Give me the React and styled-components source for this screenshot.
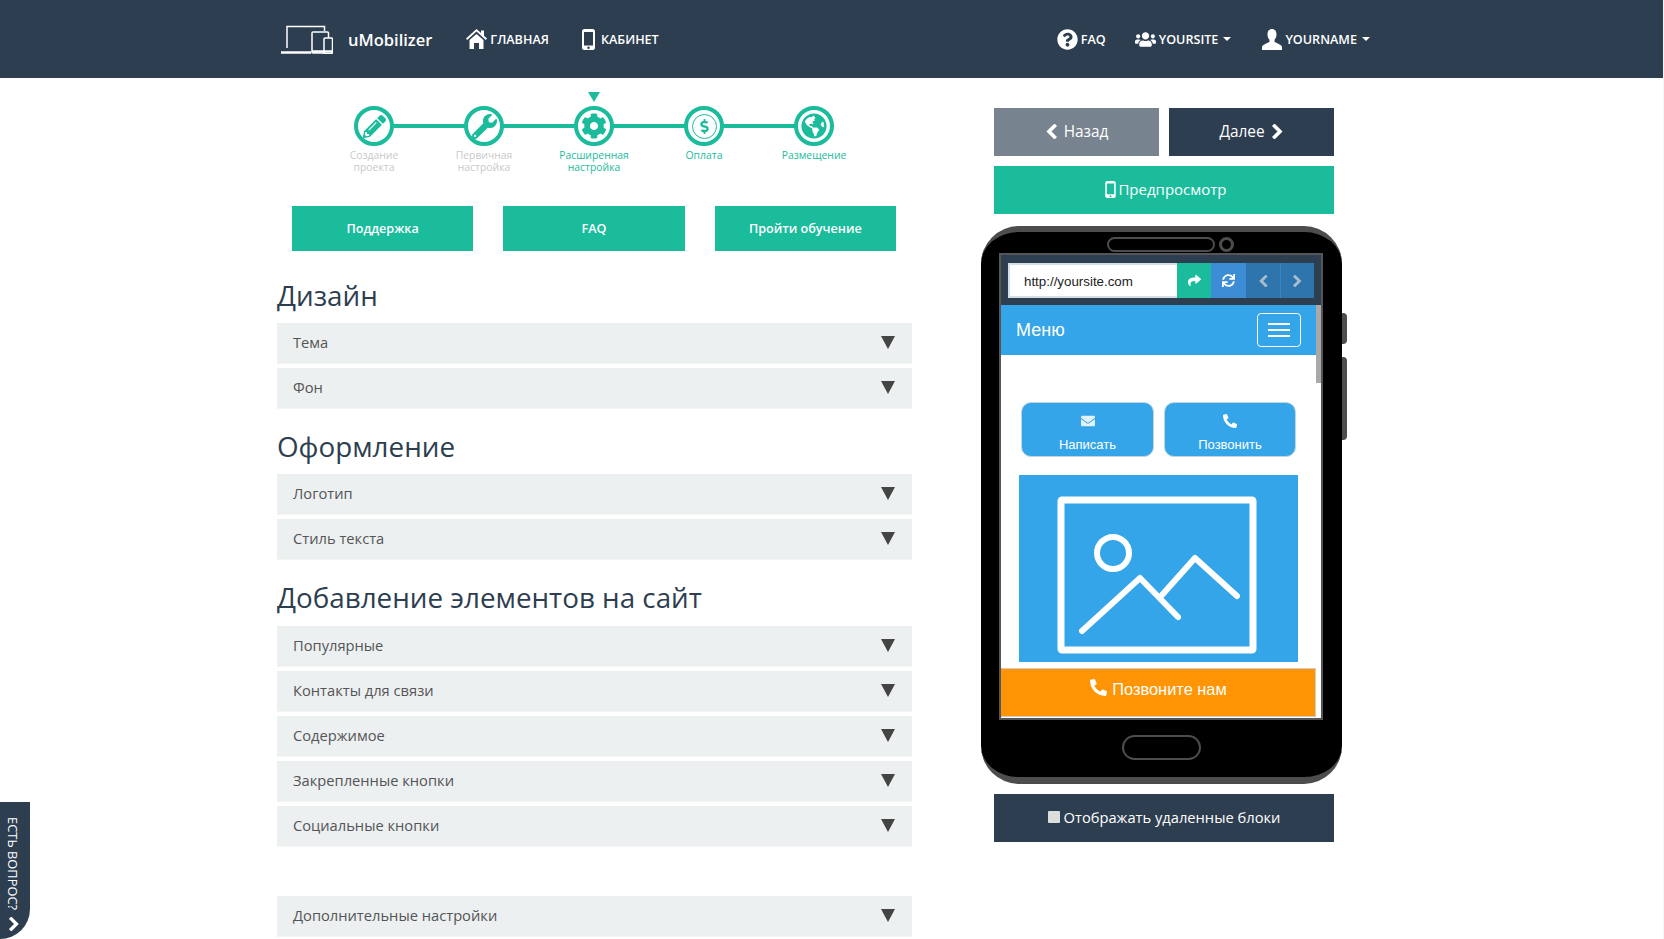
import React from "react";
import styled, { createGlobalStyle } from "styled-components";
import {
  FaPencilAlt,
  FaWrench,
  FaCog,
  FaGlobeAmericas,
  FaDollarSign,
  FaShare,
  FaSync,
  FaEnvelope,
  FaPhoneAlt,
  FaQuestionCircle,
  FaUsers,
} from "react-icons/fa";

const dark = "#2d3e50";
const green = "#1abc9c";
const sky = "#33a5e8";
const sans = `"Open Sans", "Liberation Sans", sans-serif`;
const arial = `"Liberation Sans", Arial, sans-serif`;

const GlobalStyle = createGlobalStyle`
  html, body {
    margin: 0;
    padding: 0;
    background: #fff;
    overflow: hidden;
  }
  body {
    font-family: ${sans};
    color: #333;
  }
`;

const Page = styled.div`
  position: relative;
  height: 939px;
  overflow: hidden;
  &::after {
    content: "";
    position: absolute;
    top: 0;
    right: 0;
    bottom: 0;
    width: 1px;
    background: #f5f5f5;
  }
`;

const Header = styled.header`
  height: 78px;
  background: ${dark};
`;

const Container = styled.div`
  width: 1140px;
  margin: 0 auto;
`;

const NavBar = styled(Container)`
  display: flex;
  align-items: center;
  height: 78px;
  padding: 0 30px 0 19px;
  box-sizing: border-box;
  color: #fff;
`;

const Brand = styled.div`
  display: flex;
  align-items: center;
  gap: 15px;
  font-size: 16.5px;
  font-weight: 600;
  margin-right: 34px;
`;

const NavItem = styled.div`
  display: flex;
  align-items: center;
  gap: ${(props) => props.gap || 3}px;
  font-size: 12.6px;
  font-weight: 600;
  margin-left: ${(props) => props.offset || 0}px;
  svg {
    display: block;
  }
`;

const Caret = styled.span`
  width: 0;
  height: 0;
  margin-left: 2px;
  border-left: 4px solid transparent;
  border-right: 4px solid transparent;
  border-top: 4px solid #fff;
`;

const Main = styled(Container)`
  display: grid;
  grid-template-columns: 635px 340px;
  column-gap: 82px;
  padding: 0 15px;
  box-sizing: border-box;
`;

const LeftColumn = styled.div`
  padding-top: 28px;
`;

const Steps = styled.div`
  display: flex;
  height: 100px;
  margin-left: 42px;
`;

const Step = styled.div`
  position: relative;
  width: 110px;
  display: flex;
  flex-direction: column;
  align-items: center;
  color: ${(props) => (props.active ? green : "#c9c9c9")};
  &:not(:last-child)::after {
    content: "";
    position: absolute;
    top: 18px;
    left: 74px;
    width: 72px;
    height: 4px;
    background: ${green};
  }
`;

const StepPointer = styled.span`
  position: absolute;
  top: -14px;
  left: 50%;
  margin-left: -6px;
  border-left: 6px solid transparent;
  border-right: 6px solid transparent;
  border-top: 10px solid ${green};
`;

const StepCircle = styled.div`
  width: 40px;
  height: 40px;
  box-sizing: border-box;
  border: 4px solid ${green};
  border-radius: 50%;
  display: flex;
  align-items: center;
  justify-content: center;
  color: ${green};
  font-size: ${(props) => props.size || 24}px;
`;

const DollarRing = styled.div`
  width: 25px;
  height: 25px;
  box-sizing: border-box;
  border: 1.5px solid ${green};
  border-radius: 50%;
  display: flex;
  align-items: center;
  justify-content: center;
  font-size: 15px;
`;

const StepLabel = styled.div`
  margin-top: 3px;
  font-size: 10.4px;
  line-height: 12px;
  text-align: center;
  white-space: pre-line;
`;

const HelpButtons = styled.div`
  display: flex;
  gap: 30px;
  padding: 0 16px 0 15px;
`;

const HelpButton = styled.div`
  flex: 1;
  height: 45px;
  box-sizing: border-box;
  padding-bottom: 1px;
  display: flex;
  align-items: center;
  justify-content: center;
  background: ${green};
  color: #fff;
  font-size: 12.6px;
  font-weight: 600;
`;

const Heading = styled.h2`
  margin: ${(props) => props.top || 21}px 0 ${(props) => props.bottom || 9}px;
  height: 36px;
  font-size: 27.8px;
  font-weight: 400;
  line-height: 34px;
  color: ${dark};
`;

const Row = styled.div`
  height: 40px;
  box-sizing: border-box;
  margin-bottom: 5px;
  margin-top: ${(props) => props.top || 0}px;
  padding: 0 17px 2px 16px;
  display: flex;
  align-items: center;
  justify-content: space-between;
  background: #ecf0f1;
  box-shadow: 0 1px 0 #f4f6f6;
  font-size: 14.7px;
  color: #555;
  &:last-child {
    margin-bottom: 0;
  }
`;

const RowArrow = styled.span`
  width: 0;
  height: 0;
  margin-top: 1px;
  border-left: 7px solid transparent;
  border-right: 7px solid transparent;
  border-top: 13px solid #444;
`;

const RightColumn = styled.div`
  padding-top: 30px;
`;

const ButtonPair = styled.div`
  display: flex;
  gap: 10px;
  margin-bottom: 10px;
`;

const ActionButton = styled.div`
  flex: 1;
  height: 48px;
  box-sizing: border-box;
  padding-bottom: 2px;
  display: flex;
  align-items: center;
  justify-content: center;
  gap: ${(props) => props.gap || 0}px;
  background: ${(props) => props.bg || dark};
  color: #fff;
  font-size: 15px;
`;

const NavButton = styled(ActionButton)`
  font-size: 15.4px;
`;

const PreviewButton = styled(ActionButton)`
  padding-left: 4px;
`;

const Phone = styled.div`
  position: relative;
  width: 361px;
  height: 558px;
  margin: 12px 0 10px -13px;
  box-sizing: border-box;
  padding-top: 5px;
  background: #000;
  border-top: 6px solid #4d4d4d;
  border-bottom: 7px solid #4d4d4d;
  border-radius: 38px;
`;

const SideKey = styled.span`
  position: absolute;
  right: -5px;
  top: ${(props) => props.top}px;
  width: 5px;
  height: ${(props) => props.h}px;
  background: #4d4d4d;
  border-radius: 0 4px 4px 0;
`;

const PhoneTop = styled.div`
  display: flex;
  align-items: center;
  height: 15px;
  padding-left: 126px;
  gap: 4px;
`;

const Speaker = styled.span`
  width: 108px;
  height: 15px;
  box-sizing: border-box;
  border: 2px solid #4d4d4d;
  border-radius: 8px;
`;

const Camera = styled.span`
  width: 15px;
  height: 15px;
  box-sizing: border-box;
  border: 3px solid #4d4d4d;
  border-radius: 50%;
`;

const Screen = styled.div`
  position: relative;
  width: 324px;
  height: 467px;
  margin: 1px 0 0 18px;
  box-sizing: border-box;
  background: #fff;
  border: 2px solid #555;
  font-family: ${arial};
  overflow: hidden;
`;

const ScrollThumb = styled.span`
  position: absolute;
  top: 50px;
  right: 0;
  width: 5px;
  height: 78px;
  background: #a9a9a9;
`;

const UrlBar = styled.div`
  display: flex;
  height: 50px;
  padding: 8px 7px;
  box-sizing: border-box;
  background: ${dark};
`;

const UrlField = styled.div`
  width: 169px;
  height: 35px;
  box-sizing: border-box;
  display: flex;
  align-items: center;
  padding: 2px 0 0 14px;
  background: #fff;
  border: 2px solid #d5dfe8;
  border-right: 0;
  font-size: 13.33px;
  color: #222;
`;

const UrlButton = styled.div`
  width: ${(props) => props.w || 34}px;
  height: 35px;
  box-sizing: border-box;
  display: flex;
  align-items: center;
  justify-content: center;
  background: ${(props) => props.bg};
  color: ${(props) => props.color || "#fff"};
  font-size: 13px;
  border-left: ${(props) => (props.divided ? "1px solid #3a85c0" : "0")};
`;

const MenuBar = styled.div`
  width: 315px;
  height: 50px;
  box-sizing: border-box;
  padding: 0 15px;
  display: flex;
  align-items: center;
  justify-content: space-between;
  background: ${sky};
  color: #fff;
  font-size: 18px;
`;

const Burger = styled.div`
  width: 44px;
  height: 34px;
  box-sizing: border-box;
  border: 1px solid #fff;
  border-radius: 4px;
  display: flex;
  flex-direction: column;
  align-items: center;
  justify-content: center;
  gap: 4px;
  span {
    width: 22px;
    height: 2px;
    background: #fff;
  }
`;

const ContactRow = styled.div`
  display: flex;
  gap: 10px;
  margin: 47px 0 0 20px;
`;

const ContactButton = styled.div`
  width: ${(props) => props.w}px;
  height: 55px;
  box-sizing: border-box;
  padding-top: 11px;
  display: flex;
  flex-direction: column;
  align-items: center;
  gap: 9px;
  background: ${sky};
  border: 1px solid #c3d5df;
  border-radius: 10px;
  color: #fff;
  font-size: 13px;
  line-height: 15px;
  svg {
    display: block;
  }
`;

const Picture = styled.div`
  width: 279px;
  height: 187px;
  margin: 18px 0 0 18px;
  background: ${sky};
  svg {
    display: block;
  }
`;

const CallBar = styled.div`
  width: 315px;
  height: 49px;
  margin-top: 6px;
  box-sizing: border-box;
  padding-top: 10px;
  display: flex;
  justify-content: center;
  gap: 5px;
  background: #ff9505;
  border: 1px solid #ccc;
  border-left-color: #ff9505;
  color: #fff;
  font-size: 16.4px;
  line-height: 20px;
`;

const HomeButton = styled.div`
  width: 79px;
  height: 25px;
  margin: 15px 0 0 141px;
  box-sizing: border-box;
  border: 2px solid #4d4d4d;
  border-radius: 13px;
`;

const ToggleBar = styled(ActionButton)`
  gap: 4px;
  font-size: 14.7px;
`;

const FakeCheck = styled.span`
  width: 12px;
  height: 12px;
  background: #ddd;
  border-radius: 1px;
`;

const QuestionTab = styled.div`
  position: absolute;
  left: 0;
  bottom: 0;
  width: 30px;
  height: 137px;
  box-sizing: border-box;
  padding-top: 15px;
  background: ${dark};
  border-radius: 0 0 30px 0;
  color: #fff;
  display: flex;
  flex-direction: column;
  align-items: flex-start;
  gap: 3px;
  font-size: 12.9px;
`;

const TabText = styled.span`
  writing-mode: vertical-rl;
  line-height: 14px;
  margin-left: 6px;
  white-space: nowrap;
`;

const TabChevron = styled.span`
  margin: 4px 0 0 9px;
  svg {
    display: block;
  }
`;

// толстый шеврон как у glyphicon
function Chevron({ left, size = 14, color = "currentColor" }) {
  return (
    <svg width={size * 0.8} height={size} viewBox="0 0 12 15" fill="none">
      <path
        d={left ? "M9.500 2 4 7.500 9.500 13" : "M2.500 2 8 7.500 2.500 13"}
        stroke={color}
        strokeWidth="3.600"
        strokeLinecap="square"
      />
    </svg>
  );
}

// логотип: ноутбук, планшет и телефон
function DevicesLogo() {
  return (
    <svg width="52" height="29" viewBox="0 0 52 29" fill="none" stroke="#fff">
      <path d="M6 23V1.500h37.500V6" strokeWidth="1.500" />
      <path d="M0 26.500h30v2H0z" fill="#fff" strokeWidth="0.500" />
      <rect x="31" y="7" width="16.500" height="21" rx="1" fill="#2d3e50" strokeWidth="1.500" />
      <rect x="43" y="13" width="8.500" height="15.500" rx="1" fill="#2d3e50" strokeWidth="1.500" />
      <path d="M31 26.500h12M43 26.500h8.500" strokeWidth="2.500" />
    </svg>
  );
}

function HomeIcon() {
  return (
    <svg width="21" height="20" viewBox="0 0 21 20" fill="#fff">
      <path d="M10.500 0 15 4V1.500h3v5.300l3 2.800-1.200 1.300L10.500 2.600 1.200 10.900 0 9.600z" />
      <path d="M3.500 11 10.500 5l7 6v9H13v-6H8v6H3.500z" />
    </svg>
  );
}

function MobileIcon({ width = 13, height = 21 }) {
  return (
    <svg width={width} height={height} viewBox="0 0 13 21" fill="#fff">
      <path d="M2.500 0h8A2.500 2.500 0 0 1 13 2.500v16a2.500 2.500 0 0 1-2.500 2.500h-8A2.500 2.500 0 0 1 0 18.500v-16A2.500 2.500 0 0 1 2.500 0zM2 3v13.500h9V3zm4.500 14.500a1.200 1.200 0 1 0 0 2.400 1.200 1.200 0 0 0 0-2.400z" fillRule="evenodd" />
    </svg>
  );
}

function UserIcon() {
  return (
    <svg width="20" height="21" viewBox="0 0 20 21" fill="#fff">
      <path d="M10 0c3 0 4.500 2.300 4.500 5.500 0 2.300-.8 4.200-2 5.300v1.700c0 1.200 7.500 2.800 7.500 5.500V21H0v-3c0-2.700 7.500-4.300 7.500-5.500v-1.700c-1.200-1.100-2-3-2-5.300C5.500 2.300 7 0 10 0z" />
    </svg>
  );
}

function PictureIcon() {
  return (
    <svg width="279" height="187" viewBox="0 0 279 187" fill="none" stroke="#fff">
      <rect x="42" y="25" width="192" height="150" rx="1" strokeWidth="7" strokeLinejoin="round" />
      <circle cx="94" cy="78" r="16" strokeWidth="6" />
      <path d="M63 156 121 103 159 142" strokeWidth="6" strokeLinecap="round" strokeLinejoin="round" />
      <path d="M143 120 176 83 218 121" strokeWidth="6" strokeLinecap="round" strokeLinejoin="round" />
    </svg>
  );
}

const steps = [
  { label: "Создание\nпроекта", icon: <FaPencilAlt />, size: 23 },
  { label: "Первичная\nнастройка", icon: <FaWrench />, size: 25 },
  { label: "Расширенная\nнастройка", icon: <FaCog />, size: 26, active: true },
  { label: "Оплата", icon: <DollarRing><FaDollarSign /></DollarRing>, active: true },
  { label: "Размещение", icon: <FaGlobeAmericas />, size: 26, active: true },
];

const sections = [
  { title: "Дизайн", top: 27, rows: ["Тема", "Фон"] },
  { title: "Оформление", rows: ["Логотип", "Стиль текста"] },
  {
    title: "Добавление элементов на сайт",
    bottom: 10,
    rows: [
      "Популярные",
      "Контакты для связи",
      "Содержимое",
      "Закрепленные кнопки",
      "Социальные кнопки",
    ],
  },
];

export default function App() {
  return (
    <Page>
      <GlobalStyle />
      <Header>
        <NavBar>
          <Brand>
            <DevicesLogo />
            uMobilizer
          </Brand>
          <NavItem>
            <HomeIcon />
            ГЛАВНАЯ
          </NavItem>
          <NavItem gap={6} offset={33}>
            <MobileIcon />
            КАБИНЕТ
          </NavItem>
          <NavItem offset={398}>
            <FaQuestionCircle size={21} />
            FAQ
          </NavItem>
          <NavItem offset={29}>
            <FaUsers size={21} />
            YOURSITE
            <Caret />
          </NavItem>
          <NavItem offset={31}>
            <UserIcon />
            YOURNAME
            <Caret />
          </NavItem>
        </NavBar>
      </Header>

      <Main>
        <LeftColumn>
          <Steps>
            {steps.map((step, idx) => (
              <Step key={idx} active={step.active}>
                {idx === 2 && <StepPointer />}
                <StepCircle size={step.size}>{step.icon}</StepCircle>
                <StepLabel>{step.label}</StepLabel>
              </Step>
            ))}
          </Steps>
          <HelpButtons>
            <HelpButton>Поддержка</HelpButton>
            <HelpButton>FAQ</HelpButton>
            <HelpButton>Пройти обучение</HelpButton>
          </HelpButtons>
          {sections.map((section) => (
            <React.Fragment key={section.title}>
              <Heading top={section.top} bottom={section.bottom}>
                {section.title}
              </Heading>
              {section.rows.map((row) => (
                <Row key={row}>
                  {row}
                  <RowArrow />
                </Row>
              ))}
            </React.Fragment>
          ))}
          <Row top={50}>
            Дополнительные настройки
            <RowArrow />
          </Row>
        </LeftColumn>

        <RightColumn>
          <ButtonPair>
            <NavButton bg="#77838f" gap={7}>
              <Chevron left size={15} />
              Назад
            </NavButton>
            <NavButton gap={7}>
              Далее
              <Chevron size={15} />
            </NavButton>
          </ButtonPair>
          <PreviewButton bg={green} gap={2}>
            <MobileIcon width={11} height={17} />
            Предпросмотр
          </PreviewButton>

          <Phone>
            <SideKey top={81} h={31} />
            <SideKey top={125} h={83} />
            <PhoneTop>
              <Speaker />
              <Camera />
            </PhoneTop>
            <Screen>
              <ScrollThumb />
              <UrlBar>
                <UrlField>http://yoursite.com</UrlField>
                <UrlButton bg={green}>
                  <FaShare />
                </UrlButton>
                <UrlButton bg="#3c8dd5" w={35}>
                  <FaSync />
                </UrlButton>
                <UrlButton bg="#2e75ad" color="#a9bccb">
                  <Chevron left size={12} />
                </UrlButton>
                <UrlButton bg="#2e75ad" color="#a9bccb" divided>
                  <Chevron size={12} />
                </UrlButton>
              </UrlBar>
              <MenuBar>
                Меню
                <Burger>
                  <span />
                  <span />
                  <span />
                </Burger>
              </MenuBar>
              <ContactRow>
                <ContactButton w={133}>
                  <FaEnvelope size={14} color="#e3f2fb" />
                  Написать
                </ContactButton>
                <ContactButton w={132}>
                  <FaPhoneAlt size={14} />
                  Позвонить
                </ContactButton>
              </ContactRow>
              <Picture>
                <PictureIcon />
              </Picture>
              <CallBar>
                <FaPhoneAlt size={17} />
                Позвоните нам
              </CallBar>
            </Screen>
            <HomeButton />
          </Phone>

          <ToggleBar>
            <FakeCheck />
            Отображать удаленные блоки
          </ToggleBar>
        </RightColumn>
      </Main>

      <QuestionTab>
        <TabText>ЕСТЬ ВОПРОС?</TabText>
        <TabChevron>
          <Chevron size={14} />
        </TabChevron>
      </QuestionTab>
    </Page>
  );
}
